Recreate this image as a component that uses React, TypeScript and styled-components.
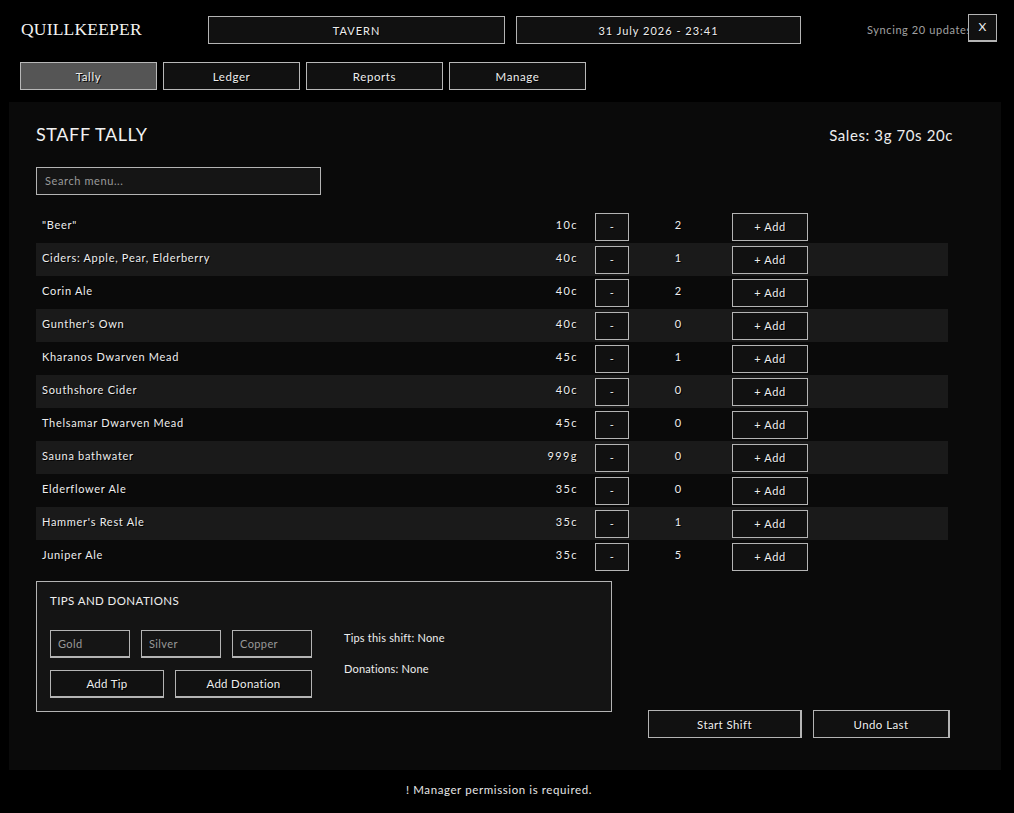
import React from "react";
import styled, { createGlobalStyle } from "styled-components";

const Global = createGlobalStyle`
  html, body { margin: 0; padding: 0; background: #000; }
  body { font-family: Lato, "Open Sans", sans-serif; color: #e6e6e6; }
  * { box-sizing: border-box; }
`;

const Page = styled.div`
  width: 1014px;
  min-height: 813px;
  background: #000;
  position: relative;
`;

const Header = styled.header`
  display: flex;
  align-items: center;
  padding: 16px 0 0 21px;
  height: 44px;
`;

const Logo = styled.div`
  width: 187px;
  font-family: "Liberation Serif", serif;
  font-size: 17.5px;
  letter-spacing: 0.2px;
  color: #f2f2f2;
  margin-top: -2px;
`;

const InfoBox = styled.div<{ $w: number; $spacing?: number }>`
  width: ${(p) => p.$w}px;
  height: 28px;
  background: #111;
  border: 1px solid #b4b4b4;
  display: flex;
  align-items: center;
  justify-content: center;
  font-size: 11px;
  letter-spacing: ${(p) => p.$spacing ?? 1}px;
  color: #eee;
  text-shadow: 1px 1px 0 #000;
  & + & { margin-left: 11px; }
`;

const Sync = styled.div`
  margin-left: 66px;
  font-size: 11px;
  letter-spacing: 0.6px;
  color: #a0a0a0;
  white-space: nowrap;
  margin-top: -1px;
`;

const CloseButton = styled.button`
  position: absolute;
  top: 14px;
  right: 17px;
  width: 29px;
  height: 28px;
  background: #111;
  border: 1px solid #b4b4b4;
  border-bottom-width: 2px;
  color: #eee;
  font-family: Lato, sans-serif;
  font-size: 12px;
  padding: 0 0 3px;
`;

const Nav = styled.nav`
  display: flex;
  gap: 6px;
  padding: 18px 0 0 20px;
`;

const Tab = styled.button<{ $active?: boolean }>`
  width: 137px;
  height: 28px;
  background: ${(p) => (p.$active ? "#555" : "#111")};
  border: 1px solid #b8b8b8;
  color: #eee;
  font-family: Lato, sans-serif;
  font-size: 11.5px;
  letter-spacing: 0.6px;
  text-shadow: 1px 1px 0 #000;
  padding: 0;
`;

const Panel = styled.main`
  margin: 12px 13px 0 9px;
  height: 668px;
  background: #0a0a0a;
  padding: 21px 48px 0 27px;
`;

const TitleRow = styled.div`
  display: flex;
  justify-content: space-between;
  align-items: flex-start;
`;

const Title = styled.h1`
  margin: 0;
  font-size: 18px;
  font-weight: 400;
  letter-spacing: 0.6px;
  color: #f2f2f2;
`;

const Sales = styled.div`
  font-size: 15px;
  letter-spacing: 0.6px;
  color: #eee;
  margin-top: 3px;
`;

const Search = styled.input`
  display: block;
  margin-top: 22px;
  width: 285px;
  height: 28px;
  background: #151515;
  border: 1px solid #b4b4b4;
  color: #eee;
  font-family: Lato, sans-serif;
  font-size: 11px;
  letter-spacing: 0.6px;
  padding: 0 8px 2px;
  outline: none;
  &::placeholder { color: #9a9a9a; }
`;

const List = styled.div`
  margin-top: 15px;
  margin-right: 5px;
`;

const Row = styled.div<{ $alt: boolean }>`
  display: grid;
  grid-template-columns: 1fr 77px 34px 103px 76px 140px;
  align-items: center;
  height: 33px;
  padding-left: 6px;
  background: ${(p) => (p.$alt ? "#1a1a1a" : "transparent")};
  font-size: 11px;
  color: #eee;
  text-shadow: 1px 1px 0 #000;
`;

const Name = styled.div`
  letter-spacing: 0.7px;
  padding-bottom: 5px;
`;

const Price = styled.div`
  text-align: right;
  padding-right: 17px;
  letter-spacing: 1.4px;
  padding-bottom: 5px;
`;

const Count = styled.div`
  text-align: center;
  padding-bottom: 5px;
  padding-right: 5px;
`;

const SmallButton = styled.button<{ $w: number }>`
  width: ${(p) => p.$w}px;
  height: 28px;
  background: #111;
  border: 1px solid #b4b4b4;
  color: #eee;
  font-family: Lato, sans-serif;
  font-size: 11px;
  letter-spacing: 0.6px;
  text-shadow: 1px 1px 0 #000;
  padding: 0;
`;

const Lower = styled.div`
  display: flex;
  align-items: flex-start;
  margin-top: 8px;
`;

const TipsBox = styled.section`
  width: 576px;
  height: 131px;
  background: #141414;
  border: 1px solid #b4b4b4;
  padding: 12px 13px 0;
`;

const TipsTitle = styled.h2`
  margin: 0;
  font-size: 11.5px;
  font-weight: 400;
  letter-spacing: 0.4px;
  color: #eee;
`;

const TipsBody = styled.div`
  display: flex;
  margin-top: 23px;
`;

const TipsForm = styled.div`
  display: grid;
  grid-template-columns: repeat(3, 80px);
  column-gap: 11px;
  row-gap: 12px;
`;

const Coin = styled.input`
  width: 80px;
  height: 28px;
  background: #151515;
  border: 1px solid #b4b4b4;
  border-bottom-width: 2px;
  color: #eee;
  font-family: Lato, sans-serif;
  font-size: 11px;
  letter-spacing: 0.4px;
  padding: 0 7px 1px;
  outline: none;
  &::placeholder { color: #999; }
`;

const FormButtons = styled.div`
  grid-column: 1 / -1;
  display: grid;
  grid-template-columns: 114px 137px;
  column-gap: 11px;
`;

const FormButton = styled.button`
  height: 28px;
  background: #111;
  border: 1px solid #b4b4b4;
  border-bottom-width: 2px;
  color: #eee;
  font-family: Lato, sans-serif;
  font-size: 11.5px;
  letter-spacing: 0.3px;
  text-shadow: 1px 1px 0 #000;
  padding: 0;
`;

const TipsInfo = styled.div`
  margin-left: 32px;
  display: flex;
  flex-direction: column;
  gap: 18px;
  font-size: 11px;
  letter-spacing: 0.2px;
  color: #eee;
  padding-top: 1px;
`;

const Actions = styled.div`
  display: flex;
  gap: 11px;
  margin-left: 36px;
  padding-top: 129px;
`;

const ActionButton = styled.button<{ $w: number }>`
  width: ${(p) => p.$w}px;
  height: 28px;
  background: #111;
  border: 1px solid #b4b4b4;
  border-right-width: 2px;
  color: #eee;
  font-family: Lato, sans-serif;
  font-size: 11.5px;
  letter-spacing: 0.4px;
  text-shadow: 1px 1px 0 #000;
  padding: 0;
`;

const Footer = styled.footer`
  text-align: center;
  font-size: 11.5px;
  letter-spacing: 0.6px;
  color: #e6e6e6;
  padding-top: 13px;
  padding-right: 16px;
`;

const items: { name: string; price: string; count: number }[] = [
  { name: '"Beer"', price: "10c", count: 2 },
  { name: "Ciders: Apple, Pear, Elderberry", price: "40c", count: 1 },
  { name: "Corin Ale", price: "40c", count: 2 },
  { name: "Gunther's Own", price: "40c", count: 0 },
  { name: "Kharanos Dwarven Mead", price: "45c", count: 1 },
  { name: "Southshore Cider", price: "40c", count: 0 },
  { name: "Thelsamar Dwarven Mead", price: "45c", count: 0 },
  { name: "Sauna bathwater", price: "999g", count: 0 },
  { name: "Elderflower Ale", price: "35c", count: 0 },
  { name: "Hammer's Rest Ale", price: "35c", count: 1 },
  { name: "Juniper Ale", price: "35c", count: 5 },
];

export default function App() {
  return (
    <Page>
      <Global />
      <Header>
        <Logo>QUILLKEEPER</Logo>
        <InfoBox $w={297}>TAVERN</InfoBox>
        <InfoBox $w={285}>31 July 2026 - 23:41</InfoBox>
        <Sync>Syncing 20 updates</Sync>
      </Header>
      <CloseButton>X</CloseButton>
      <Nav>
        <Tab $active>Tally</Tab>
        <Tab>Ledger</Tab>
        <Tab>Reports</Tab>
        <Tab>Manage</Tab>
      </Nav>
      <Panel>
        <TitleRow>
          <Title>STAFF TALLY</Title>
          <Sales>Sales: 3g 70s 20c</Sales>
        </TitleRow>
        <Search placeholder="Search menu..." />
        <List>
          {items.map((it, i) => (
            <Row key={it.name} $alt={i % 2 === 1}>
              <Name>{it.name}</Name>
              <Price>{it.price}</Price>
              <SmallButton $w={34}>-</SmallButton>
              <Count>{it.count}</Count>
              <SmallButton $w={76}>+ Add</SmallButton>
              <div />
            </Row>
          ))}
        </List>
        <Lower>
          <TipsBox>
            <TipsTitle>TIPS AND DONATIONS</TipsTitle>
            <TipsBody>
              <TipsForm>
                <Coin placeholder="Gold" />
                <Coin placeholder="Silver" />
                <Coin placeholder="Copper" />
                <FormButtons>
                  <FormButton>Add Tip</FormButton>
                  <FormButton>Add Donation</FormButton>
                </FormButtons>
              </TipsForm>
              <TipsInfo>
                <div>Tips this shift: None</div>
                <div>Donations: None</div>
              </TipsInfo>
            </TipsBody>
          </TipsBox>
          <Actions>
            <ActionButton $w={154}>Start Shift</ActionButton>
            <ActionButton $w={137}>Undo Last</ActionButton>
          </Actions>
        </Lower>
      </Panel>
      <Footer>! Manager permission is required.</Footer>
    </Page>
  );
}
